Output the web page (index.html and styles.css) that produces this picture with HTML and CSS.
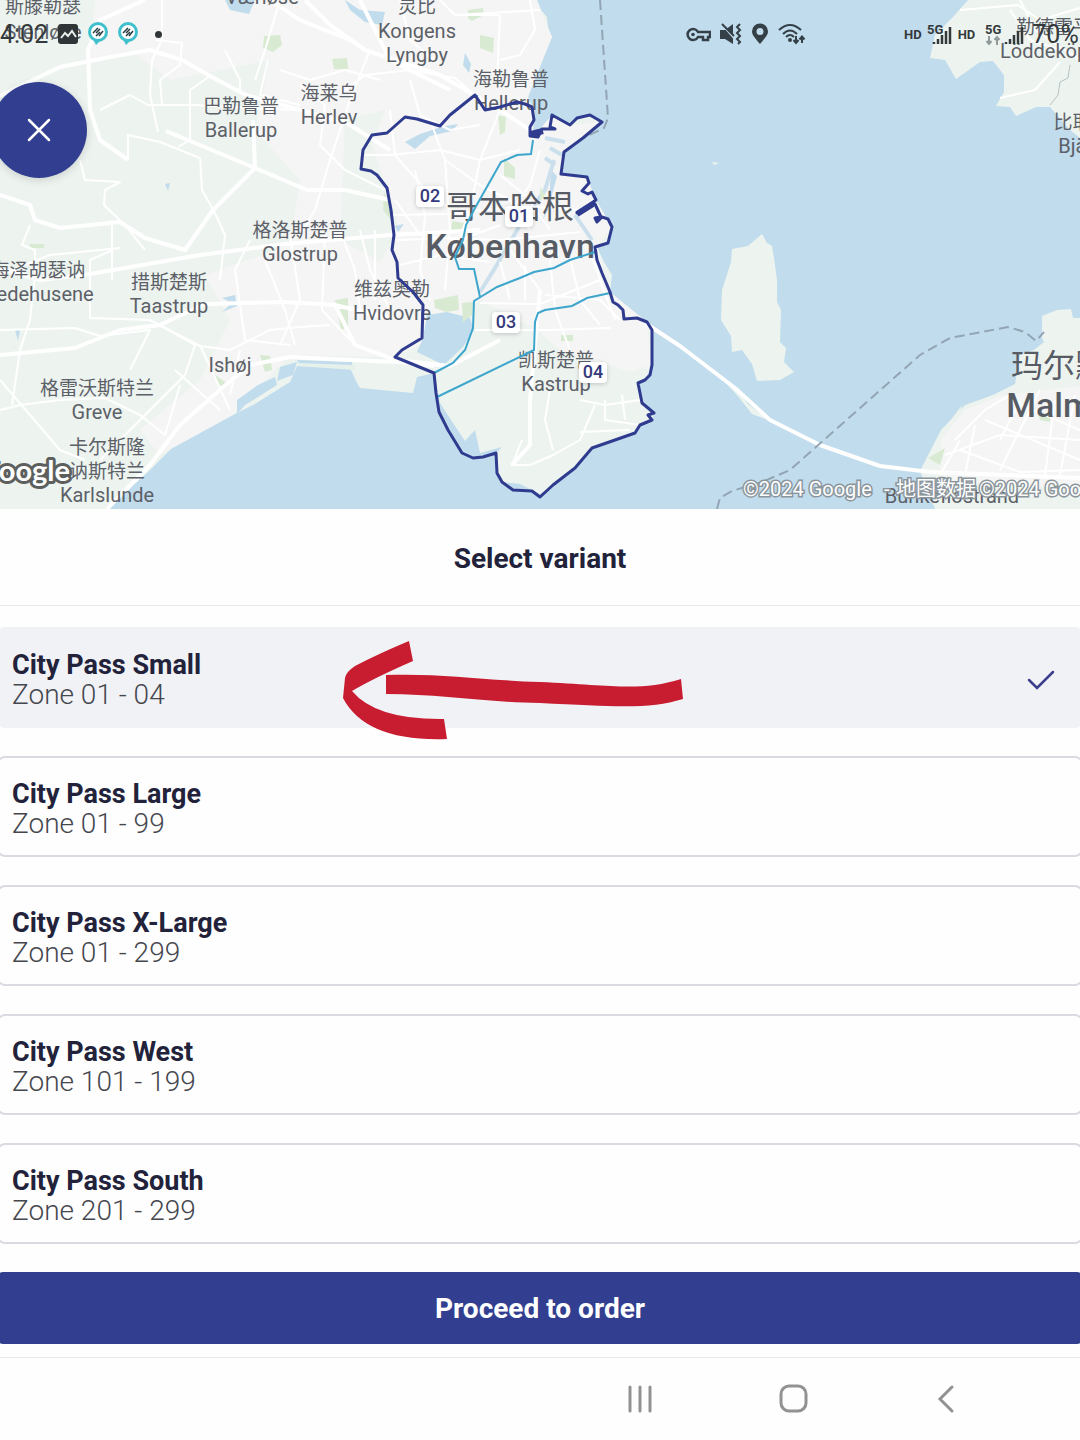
FILE: index.html
```html
<!DOCTYPE html>
<html lang="en">
<head>
    <meta charset="UTF-8">
    <meta name="viewport" content="width=device-width, initial-scale=1.0">
    <title>Select variant</title>
    <link rel="stylesheet" href="styles.css">
</head>
<body>

    <!-- Zone map -->
    <header class="map">
        <svg class="map-art" viewBox="0 0 1080 509" preserveAspectRatio="xMidYMid slice" role="img" aria-label="Map of Copenhagen zones">
            <rect class="water" width="1080" height="509"/>

            <!-- land -->
            <path class="land" d="M0 0H537L540 9 547 17 548 28 552 37 547 48 540 60 532 77 528 97 535 113 530 127 532 138 542 133 550 127 552 115 570 125 585 115 602 122 583 138 564 152 561 174 587 177 589 183 582 191 596 200 601 217 612 227 608 243 597 247 604 262 612 275 610 292 624 310 624 319 647 322 652 330 652 365 645 380 638 383 642 403 654 413 652 420 640 425 635 433 615 440 592 448 575 468 553 485 540 494 520 484 502 482 497 473 496 453 502 447 480 453 475 430 465 441 453 423 440 403 434 373 417 377 413 393 360 388 357 383 350 368 297 366 290 382 253 405 233 415 177 443 147 473 107 509H0Z"/>
            <path class="urban" d="M95 0H537L552 37 528 97 535 113 532 138 552 115 570 125 602 122 564 152 561 174 587 177 596 200 612 227 597 247 610 292 647 322 652 365 630 372 560 350 537 330 480 300 460 325 395 357 290 355 233 415 160 455 140 430 200 380 230 320 205 275 290 245 300 180 255 130 270 60 170 80 130 50 90 60Z"/>
            <path class="field" d="M345 120L385 110 372 145 400 230 380 262 340 240ZM478 322L530 325 535 345 434 374 470 345ZM550 395L590 385 600 410 570 450 530 455 520 430Z"/>
            <path class="land" d="M762 234L767 243 772 246 774 258 777 280 777 302 781 310 780 342 786 348 784 362 794 372 780 380 757 381 752 364 742 350 732 352 731 336 721 320 722 290 731 262 732 249 748 246ZM968 0H1080V138L1070 130 1050 107 1036 107 1016 116 1010 107 996 106 1004 92 1004 75 993 61 980 62 956 79 945 60 930 58 935 35 953 17Z"/>
            <path class="land" d="M1042 338L1042 316 1057 310 1071 309 1073 318 1080 318V509H935L920 471 941 430 965 405 993 395 1015 384 1020 355 1034 350 1044 342Z"/>
            <path class="urban" d="M941 440L965 410 1000 396 1080 386V490L940 480Z"/>
            <path class="land" d="M948 424L962 405 957 422ZM712 162L719 163 714 165Z"/>
            <path class="shore" d="M297 360L355 364 355 370 297 366Z"/>
            <path class="land" d="M720 377L733 385 748 404 768 420 752 414 737 395Z"/>

            <!-- lakes, bays and harbour water -->
            <path class="water" d="M427 315L447 312 470 318 474 330 463 347 444 365 417 352 423 338ZM237 400L258 385 275 377 277 385 258 397 245 405 237 414ZM280 367L297 362 293 375 277 381ZM297 360L352 362 352 365 299 363ZM405 142L420 134 445 126 458 124 452 131 430 136 415 149ZM225 0H255L249 14 230 10ZM345 0L360 10 385 12 382 25 365 22 350 10ZM465 53L471 64 469 73 463 65ZM395 226L404 224 398 232ZM222 298L235 295 237 306 222 312 232 303ZM557 176L548 210 540 225 549 205 551 170ZM165 184L170 183 168 191ZM15 330L20 330 18 341Z"/>
            <path class="canal" d="M480 292L495 268 520 225 545 190 554 160M545 138L565 142M550 148L562 155M545 158L555 165M575 215L592 240"/>

            <!-- parks -->
            <path class="park" d="M264 36L280 35 282 45 273 52 263 48ZM332 59L347 58 348 69 334 69ZM468 10L483 8 484 15 472 21 468 18ZM480 35L494 38 493 53 480 48ZM504 158L515 168 515 179 504 176ZM452 221L464 223 461 233 451 231ZM498 115L506 117 505 132 500 135ZM434 300L458 295 459 310 446 312 435 308ZM462 303L473 302 472 315 463 322ZM561 335H573V341H561ZM335 300L348 298 348 327 341 330ZM260 355L270 356 272 370 265 372ZM214 374L229 385 218 386ZM930 457L945 448 940 465 928 458ZM1038 413L1051 415 1050 422 1040 420ZM384 192L390 205 390 219 383 210ZM540 187L545 195 540 201ZM30 244H44V248H30Z"/>

            <!-- motorways -->
            <g class="road wide">
                <path d="M0 96L60 67 110 57 150 50 182 60 210 76 246 95 300 110 345 122 390 150M145 0L100 20 88 50 90 110 100 140 128 160M0 268L40 280 90 274 200 255 285 244 390 235 480 230M166 131L255 168 307 190 345 190 390 200M0 195L30 205 35 220 60 228 120 222 145 238 185 250 213 210 255 168 253 120M0 355L75 348 120 330 160 325 205 304 285 302 335 305 390 318M335 305L355 345 395 360 450 366 500 340"/>
                <path d="M107 509L150 465 180 425 222 388 250 365 290 357 350 360 400 362 434 366M540 290L530 400 530 445 512 465M305 0L330 25 365 50 440 75 500 110 530 130M270 0L300 20 350 40M645 323L680 346 735 388 770 420 820 445 880 466 930 472 1080 478M360 0L390 60 450 90"/>
            </g>

            <!-- smaller streets -->
            <g class="road">
                <path d="M162 0L162 40 152 60 150 95 158 132M155 40L182 43 180 65 160 80 162 105M210 76L190 90 190 140 178 147M100 110L130 95 148 105 195 105 250 108 300 110M128 160L128 135 160 142 200 158 202 190 215 213 225 235 220 280M80 160L85 180 120 182 105 190 104 205 125 225 145 250M35 280L35 250 22 245 30 225M0 275L50 255 120 248M112 280V220M113 250L90 260 90 318 150 320 200 346 230 350 270 330 300 327 330 325"/>
                <path d="M0 330L75 328 100 336 150 330 130 370M36 265L30 320 20 350 12 405M0 410L20 405 60 400 105 398 140 415 165 435M0 380L60 450 85 460M150 320L195 345 185 375 150 410 125 435 100 460M200 345L230 410M175 370L220 410M180 385L165 435M240 350L230 395M250 240L235 270 245 340 290 345M265 260L285 310 295 345M290 235L300 300 280 345M325 235L322 310 350 340"/>
                <path d="M225 50L240 80 240 90M280 0L265 50 255 80M400 0L410 40 440 65M440 0L455 15 500 15M500 15L497 80M455 15L540 10M530 0L535 30 520 55 500 60M345 90L365 75 410 70 455 78 475 95M280 70L310 80 345 70 380 80M300 85L325 105 320 145 345 170 385 190M370 50L350 100 330 160 315 210 300 235M268 60L260 95 300 105M410 80L420 115 450 130 480 125M365 155L390 155 440 150 480 160 520 150M390 110L395 155 430 195 460 215M430 120L445 160 480 185 510 200 530 230M500 110L480 160 470 210 455 250"/>
                <path d="M390 215L450 214 520 206 580 210M397 240L450 238 500 240 580 232M400 265L440 255 490 262M415 170L425 215 420 270 430 300M445 160L450 230 445 290M360 230L370 270 390 310M340 230L355 270 360 310M375 230V300M500 175L525 195 550 230M540 150L530 185 512 210M395 200L420 235 460 240 500 225"/>
                <path d="M475 330L550 330 610 328M480 303L540 304 600 280M550 260L555 310 570 350M570 258L580 300 600 325M590 250L600 280 615 320M545 295L600 300 620 320M500 262L510 300M525 265V300M510 250L540 290M550 390L545 420 553 450M530 465L512 465 522 440M580 400L605 405 640 400M595 405L580 440 553 455 530 465M605 400V420L640 425M580 432L630 430M622 395L625 420"/>
                <path d="M960 10L1018 5 1040 20 1080 8M1020 0L1035 30 1080 60M1060 62L1035 90 1000 98M1010 10L1030 40 1060 50M955 440L985 410 1010 395M945 455L1000 435 1080 440M985 420L1080 460M1010 400L1080 430M1000 470L1030 410 1040 390M960 450L1020 472 1080 470M1055 400L1045 475M1075 395L1060 475M975 425L965 475M1020 400L1000 440M940 475L960 440"/>
            </g>

            <!-- ferry lines -->
            <path class="ferry" d="M600 0L608 118 604 128 583 138M717 509L720 498 732 491 762 482 790 470 920 355 950 338 1008 327 1025 332 1036 341 1044 332"/>
            <path class="border" d="M1070 65L1068 78 1060 82 1058 95 1050 105"/>

            <!-- place names -->
            <g class="place">
                <text x="43" y="39">Stenløse</text>
                <text x="262" y="4">Værløse</text>
                <text x="417" y="38">Kongens</text>
                <text x="417" y="62">Lyngby</text>
                <text x="511" y="110">Hellerup</text>
                <text x="329" y="124">Herlev</text>
                <text x="241" y="137">Ballerup</text>
                <text x="300" y="261">Glostrup</text>
                <text x="38" y="301">Hedehusene</text>
                <text x="169" y="313">Taastrup</text>
                <text x="392" y="320">Hvidovre</text>
                <text x="230" y="372">Ishøj</text>
                <text x="97" y="419">Greve</text>
                <text x="107" y="502">Karlslunde</text>
                <text x="556" y="391">Kastrup</text>
                <text x="952" y="503">Bunkeflostrand</text>
                <text x="1063" y="58">Löddeköpinge</text>
                <text x="1090" y="153">Bjärred</text>
            </g>
            <g class="place place-zh">
                <text x="43" y="13">斯滕勒瑟</text>
                <text x="417" y="13">灵比</text>
                <text x="511" y="86">海勒鲁普</text>
                <text x="329" y="100">海莱乌</text>
                <text x="241" y="113">巴勒鲁普</text>
                <text x="300" y="237">格洛斯楚普</text>
                <text x="38" y="277">海泽胡瑟讷</text>
                <text x="169" y="289">措斯楚斯</text>
                <text x="392" y="296">维兹奥勒</text>
                <text x="97" y="395">格雷沃斯特兰</text>
                <text x="107" y="454">卡尔斯隆</text>
                <text x="107" y="478">讷斯特兰</text>
                <text x="556" y="367">凯斯楚普</text>
                <text x="1054" y="34">勒德雷平</text>
                <text x="1082" y="129">比耶雷</text>
            </g>
            <g class="city">
                <text x="510" y="218">哥本哈根</text>
                <text class="strong" x="510" y="258">København</text>
                <text x="1059" y="377">玛尔默</text>
                <text class="strong" x="1059" y="417">Malmö</text>
            </g>

            <!-- zone borders -->
            <path class="zone-line" d="M533 140L531 154 517 155 501 162 475 208 466 225 463 240 455 257 459 269 474 269 480 297M434 373L453 363 465 350 473 328 474 301 497 287 520 278 534 272 554 268 570 260 595 252M437 397L534 350 535 322 538 313 545 310 572 306 587 298 610 293"/>
            <path class="zone-edge" d="M475 95L485 110 500 107 517 102 525 104 532 107 534 120 530 127 530 136 538 137 542 129 555 129 550 127 552 115 570 125 577 118 590 115 602 122 583 138 564 152 561 174 587 177 589 183 582 191 588 194 592 192 596 200 577 213 595 204 601 217 595 218 597 222 602 217 608 219 612 227 608 243 595 247 597 260 602 273 610 292 613 302 618 305 623 310 624 319 637 318 647 322 652 330 652 365 650 375 645 380 638 383 642 403 654 413 648 415 652 420 640 425 635 433 615 440 592 448 575 468 553 485 540 497 532 491 513 490 502 482 497 473 496 453 483 457 473 458 462 453 448 430 439 412 436 393 434 373 395 357 402 350 422 338 423 305 413 292 398 278 397 262 392 250 394 235 391 210 387 188 377 175 371 171 361 169 363 150 372 135 387 133 405 117 417 119 440 126 450 115Z"/>
            <path class="zone-dock" d="M531 134L543 131M577 214L593 204"/>

            <g class="zone-tag">
                <rect x="416" y="186" width="28" height="21" rx="4"/><text x="430" y="202">02</text>
                <rect x="505" y="206" width="28" height="21" rx="4"/><text x="519" y="222">01</text>
                <rect x="492" y="312" width="28" height="21" rx="4"/><text x="506" y="328">03</text>
                <rect x="579" y="362" width="28" height="21" rx="4"/><text x="593" y="378">04</text>
            </g>

            <text class="google" x="70" y="481">Google</text>
            <g class="credit">
                <text x="743" y="496">©2024 Google</text>
                <text x="884" y="496">-</text>
                <text x="896" y="496">地图数据</text>
                <text x="979" y="496">©2024 Google</text>
            </g>
        </svg>

        <!-- phone status bar -->
        <div class="status">
            <div class="status-left">
                <span class="clock">4:02</span>
                <svg width="20" height="20" viewBox="0 0 20 20"><rect width="20" height="20" rx="3" fill="#303638"/><path d="M3 14L7 9 10 12 14 7 18 13" fill="none" stroke="#e9efea" stroke-width="2"/></svg>
                <svg width="20" height="24" viewBox="0 0 20 24"><path d="M5 17L8 23 14 17Z" fill="#3fc0cc"/><circle cx="10" cy="10" r="8.500" fill="#fff" stroke="#3fc0cc" stroke-width="3"/><path d="M5 11L10 6M8 11L12 7M8 14L12 10M11 14L15 9" stroke="#25393e" stroke-width="1.500"/></svg>
                <svg width="20" height="24" viewBox="0 0 20 24"><path d="M5 17L8 23 14 17Z" fill="#3fc0cc"/><circle cx="10" cy="10" r="8.500" fill="#fff" stroke="#3fc0cc" stroke-width="3"/><path d="M5 11L10 6M8 11L12 7M8 14L12 10M11 14L15 9" stroke="#25393e" stroke-width="1.500"/></svg>
                <span class="dot"></span>
            </div>
            <div class="status-mid">
                <svg width="25" height="24" viewBox="0 0 25 24"><path d="M12 10A5.500 5.500 0 1 0 12 15H17V18H22V15H24V10Z" fill="none" stroke="#343f47" stroke-width="2.500"/><circle cx="7" cy="12.500" r="1.800" fill="#343f47"/></svg>
                <svg width="22" height="24" viewBox="0 0 22 24"><path d="M0 8H5L13 2V22L5 17H0Z" fill="#343f47"/><path d="M1 1L14 16" stroke="#c1dcec" stroke-width="2"/><path d="M2 2L14 14M20 2L17 5 20 8 17 11 20 14 17 17 20 20 18 22" fill="none" stroke="#343f47" stroke-width="2"/></svg>
                <svg width="18" height="24" viewBox="0 0 18 24"><path d="M9 22C4 16 1 13 1 9.500A8 8 0 0 1 17 9.500C17 13 14 16 9 22Z" fill="#343f47"/><circle cx="9" cy="9.500" r="3.500" fill="#c1dcec"/></svg>
                <svg width="28" height="24" viewBox="0 0 28 24"><path d="M1 8Q12-2 23 8M5 12Q12 5 19 12M8 15Q12 11 16 15" fill="none" stroke="#343f47" stroke-width="2"/><circle cx="12" cy="18" r="2" fill="#343f47"/><path d="M18 14V20M15.500 18L18 21 20.500 18M24 21V15M21.500 17.500L24 14.500 26.500 17.500" fill="none" stroke="#343f47" stroke-width="2"/></svg>
            </div>
            <div class="status-right">
                <span class="hd">HD</span>
                <svg width="26" height="26" viewBox="0 0 26 26"><text class="net" x="0" y="13">5G</text><path d="M7 23V21M11 23V18M15 23V14M19 23V10M23 23V6" stroke="#34393c" stroke-width="2.500"/></svg>
                <span class="hd">HD</span>
                <svg class="second" width="42" height="26" viewBox="0 0 42 26"><text class="net" x="0" y="13">5G</text><path d="M4 15V23M1.500 20L4 23 6.500 20M12 24V16M9.500 19L12 16 14.500 19" fill="none" stroke="#929b9c" stroke-width="2"/><path d="M21 23V21M25 23V18M29 23V14M33 23V10M37 23V6" stroke="#34393c" stroke-width="2.500"/></svg>
                <span class="clock">70%</span>
            </div>
        </div>

        <button class="close" type="button" aria-label="Close">
            <svg width="24" height="24" viewBox="0 0 24 24"><path d="M2 2L22 22M22 2L2 22" stroke="#fff" stroke-width="2.500" stroke-linecap="round"/></svg>
        </button>
    </header>

    <h1 class="title">Select variant</h1>

    <!-- Variants -->
    <form class="variants">
        <label class="variant">
            <input type="radio" name="variant" value="small" checked>
            <span class="info"><span class="name">City Pass Small</span><span class="zones">Zone 01 - 04</span></span>
            <svg class="tick" width="28" height="20" viewBox="0 0 28 20"><path d="M2 10L10 18 26 2" fill="none" stroke="#3a3f8c" stroke-width="2.500" stroke-linecap="round"/></svg>
            <svg class="arrow" width="342" height="100" viewBox="342 641 342 100" aria-hidden="true">
                <path d="M409 641L413 661Q374 678 352 691Q376 720 444 719L447 739Q366 742 343 698L345 678Q346 672 355 666Q380 653 409 641ZM386 675C440 673 480 680 540 682C610 685 640 692 681 679L683 699C650 709 620 707 540 703C480 702 440 694 386 694Z" fill="#c81d31"/>
            </svg>
        </label>
        <label class="variant">
            <input type="radio" name="variant" value="large">
            <span class="info"><span class="name">City Pass Large</span><span class="zones">Zone 01 - 99</span></span>
        </label>
        <label class="variant">
            <input type="radio" name="variant" value="xlarge">
            <span class="info"><span class="name">City Pass X-Large</span><span class="zones">Zone 01 - 299</span></span>
        </label>
        <label class="variant">
            <input type="radio" name="variant" value="west">
            <span class="info"><span class="name">City Pass West</span><span class="zones">Zone 101 - 199</span></span>
        </label>
        <label class="variant">
            <input type="radio" name="variant" value="south">
            <span class="info"><span class="name">City Pass South</span><span class="zones">Zone 201 - 299</span></span>
        </label>
        <button class="proceed" type="submit">Proceed to order</button>
    </form>

    <!-- Phone navigation -->
    <nav class="phone-nav">
        <button type="button" aria-label="Recent apps">
            <svg width="30" height="30" viewBox="0 0 30 30"><path d="M5 3V27M15 3V27M25 3V27"/></svg>
        </button>
        <button type="button" aria-label="Home">
            <svg width="30" height="30" viewBox="0 0 30 30"><rect x="3" y="2" width="25" height="25" rx="8"/></svg>
        </button>
        <button type="button" aria-label="Back">
            <svg width="30" height="30" viewBox="0 0 30 30"><path d="M21 3L9 15 21 27"/></svg>
        </button>
    </nav>

</body>
</html>
```
FILE: styles.css
```css
* {
    box-sizing: border-box;
}
body {
    margin: 0;
    background-color: #fefefe;
    font-family: Roboto, "Noto Sans CJK SC", sans-serif;
    color: #22233b;
    overflow-x: hidden;
}
button {
    border: none;
    padding: 0;
    font: inherit;
    cursor: pointer;
}
svg {
    display: block;
    flex-shrink: 0;
}

/* map */
.map {
    position: relative;
    height: 509px;
    overflow: hidden;
}
.map-art {
    width: 100%;
    height: 100%;
}
.water {
    fill: #c1dcec;
}
.land {
    fill: #edf4ef;
}
.urban {
    fill: #f4f5f4;
}
.field {
    fill: #edf3ee;
}
.shore {
    fill: #e6f1ec;
}
.park {
    fill: #d9ead2;
}
.canal {
    fill: none;
    stroke: #cbdfec;
    stroke-width: 4;
}
.road {
    fill: none;
    stroke: #fff;
    stroke-width: 2;
    stroke-linejoin: round;
}
.wide {
    stroke-width: 4;
}
.ferry {
    fill: none;
    stroke: #93a5b5;
    stroke-width: 2;
    stroke-dasharray: 10 5;
}
.border {
    fill: none;
    stroke: #b6c2c4;
}
.place {
    font-size: 20px;
    fill: #5c6068;
    text-anchor: middle;
}
.place-zh {
    font-size: 19px;
}
.city {
    font-size: 32px;
    fill: #575b64;
    text-anchor: middle;
}
.strong {
    font-size: 34px;
    font-weight: 500;
}
.zone-line {
    fill: none;
    stroke: #3ea6cc;
    stroke-width: 2;
}
.zone-edge {
    fill: none;
    stroke: #2f3b8e;
    stroke-width: 3;
    stroke-linejoin: round;
}
.zone-dock {
    stroke: #2f3b8e;
    stroke-width: 6;
}
.zone-tag {
    font-size: 18px;
    font-weight: 500;
    fill: #353a7c;
    text-anchor: middle;
}
.zone-tag rect {
    fill: #fff;
    filter: drop-shadow(0 1px 2px rgba(0, 0, 0, 0.2));
}
.google {
    font-family: Lato, sans-serif;
    font-size: 29px;
    font-weight: 700;
    fill: #fff;
    stroke: #5c5f5e;
    stroke-width: 6;
    stroke-linejoin: round;
    paint-order: stroke;
    text-anchor: end;
}
.credit {
    font-size: 20px;
    fill: #fff;
    stroke: #8b959c;
    stroke-width: 3;
    paint-order: stroke;
}

/* status bar */
.status {
    position: absolute;
    top: 20px;
    left: 0;
    right: 0;
    height: 28px;
    display: flex;
    align-items: center;
    color: #34393c;
}
.status-left,
.status-mid,
.status-right {
    display: flex;
    align-items: center;
    gap: 10px;
}
.status-mid {
    gap: 9px;
    margin-left: auto;
}
.status-right {
    width: 176px;
    margin-left: 98px;
    gap: 5px;
    white-space: nowrap;
}
.clock {
    font-size: 25px;
}
.dot {
    width: 7px;
    height: 7px;
    margin-left: 7px;
    border-radius: 50%;
    background-color: #303638;
}
.hd {
    font-size: 13px;
    font-weight: 700;
}
.net {
    font-size: 13px;
    font-weight: 700;
    fill: #34393c;
}
.second {
    margin-left: 5px;
}

.close {
    position: absolute;
    top: 82px;
    left: -9px;
    width: 96px;
    height: 96px;
    display: flex;
    align-items: center;
    justify-content: center;
    border-radius: 50%;
    background-color: #323f90;
    box-shadow: 0 2px 8px rgba(0, 0, 0, 0.15);
}

/* variant list */
.title {
    margin: 0;
    padding: 34px 0 30px;
    border-bottom: 1px solid #e6e7e9;
    font-size: 28px;
    line-height: 32px;
    font-weight: 700;
    text-align: center;
}
.variants {
    display: flex;
    flex-direction: column;
    gap: 28px;
    margin: 0 -3px;
    padding: 21px 0 13px;
}
.variant {
    position: relative;
    display: flex;
    align-items: center;
    justify-content: space-between;
    padding: 22px 26px 17px 13px;
    border: 2px solid #d9dae2;
    border-radius: 8px;
    cursor: pointer;
}
.variant:has(input:checked) {
    background-color: #f1f2f6;
    border-color: #f1f2f6;
}
.variant input {
    position: absolute;
    opacity: 0;
}
.info {
    display: flex;
    flex-direction: column;
}
.name {
    font-size: 27px;
    line-height: 29px;
    font-weight: 700;
}
.zones {
    font-size: 28px;
    line-height: 29px;
    font-weight: 300;
    color: #45474f;
}
.arrow {
    position: absolute;
    top: 12px;
    left: 343px;
    z-index: 1;
}
.proceed {
    height: 72px;
    border-radius: 6px;
    background-color: #323f90;
    color: #fff;
    font-size: 28px;
    font-weight: 700;
}

/* phone navigation */
.phone-nav {
    display: flex;
    justify-content: flex-end;
    gap: 105px;
    padding: 17px 110px;
    border-top: 1px solid #e9eaea;
}
.phone-nav button {
    width: 48px;
    height: 48px;
    display: flex;
    align-items: center;
    justify-content: center;
    background: none;
}
.phone-nav svg {
    fill: none;
    stroke: #929292;
    stroke-width: 3;
    stroke-linecap: round;
}
```
